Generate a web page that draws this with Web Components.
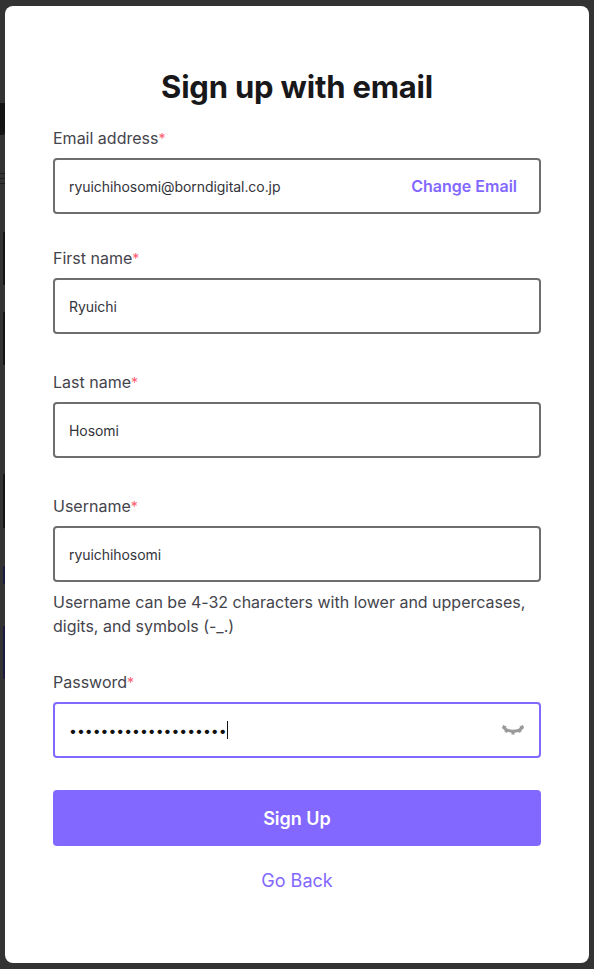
<!DOCTYPE html>
<html lang="en">
<head>
<meta charset="utf-8">
<title>Sign up with email</title>
<style>
  html, body { margin: 0; padding: 0; background: #333; }
  body { font-family: "Inter", "Liberation Sans", sans-serif; }
</style>
</head>
<body>
<signup-page>
  <signup-card heading="Sign up with email">
    <signup-field label="Email address">
      ryuichihosomi@borndigital.co.jp
      <span slot="action">Change Email</span>
    </signup-field>
    <signup-field label="First name" style="margin-top:32px">Ryuichi</signup-field>
    <signup-field label="Last name" style="margin-top:36px">Hosomi</signup-field>
    <signup-field label="Username" style="margin-top:36px">
      ryuichihosomi
      <span slot="hint">Username can be 4-32 characters with lower and uppercases, digits, and symbols (-_.)</span>
    </signup-field>
    <signup-field label="Password" focused masked style="margin-top:32px">
      ••••••••••••••••••••
      <signup-eye slot="action"></signup-eye>
    </signup-field>
    <signup-button style="margin-top:32px">Sign Up</signup-button>
    <signup-link style="margin-top:22px">Go Back</signup-link>
  </signup-card>
</signup-page>

<script>
class SignupPage extends HTMLElement {
  constructor() {
    super();
    this.attachShadow({ mode: 'open' });
    this.shadowRoot.innerHTML = `<style>
      :host {
        display: block;
        position: relative;
        box-sizing: border-box;
        height: 969px;
        padding: 6px 5px;
        background: #333;
        overflow: hidden;
      }
      /* what shows of the page behind the dimmed overlay */
      .bleed { position: absolute; left: 3px; width: 2px; background: #141414; border-radius: 1px 0 0 1px; }
      .bleed.glyph { left: 0; width: 5px; background: #141414; border-radius: 0 0 3px 0; }
      .bleed.text { left: 0; width: 5px; height: 1px; background: #1c1c1c; }
      .bleed.blue { background: #1d1a40; }
    </style>
    <div class="bleed glyph" style="top:103px;height:32px"></div>
    <div class="bleed text" style="top:173px"></div>
    <div class="bleed text" style="top:178px"></div>
    <div class="bleed text" style="top:183px"></div>
    <div class="bleed" style="top:232px;height:53px"></div>
    <div class="bleed" style="top:312px;height:53px"></div>
    <div class="bleed" style="top:474px;height:54px"></div>
    <div class="bleed blue" style="top:566px;height:18px"></div>
    <div class="bleed blue" style="top:626px;height:53px"></div>
    <slot></slot>`;
  }
}

class SignupCard extends HTMLElement {
  constructor() {
    super();
    this.attachShadow({ mode: 'open' });
    this.shadowRoot.innerHTML = `<style>
      :host {
        display: flex;
        flex-direction: column;
        position: relative;
        box-sizing: border-box;
        height: 957px;
        padding: 61px 48px 0;
        background: #fff;
        border-radius: 8px;
      }
      h1 {
        margin: 0 0 19px;
        font: 700 31px/40px "Inter", "Liberation Sans", sans-serif;
        letter-spacing: -0.2px;
        color: #18181b;
        text-align: center;
      }
    </style>
    <h1></h1>
    <slot></slot>`;
    this.shadowRoot.querySelector('h1').textContent = this.getAttribute('heading');
  }
}

class SignupField extends HTMLElement {
  constructor() {
    super();
    this.attachShadow({ mode: 'open' });
    this.shadowRoot.innerHTML = `<style>
      :host {
        display: block;
        font-family: "Inter", "Liberation Sans", sans-serif;
      }
      .label {
        font-size: 16px;
        line-height: 24px;
        color: #44444c;
        margin-bottom: 8px;
      }
      .label b { font-weight: 400; font-size: 14px; line-height: 0; color: #fb5a6e; }
      .box {
        box-sizing: border-box;
        display: flex;
        align-items: center;
        justify-content: space-between;
        height: 56px;
        padding: 0 22px 0 14px;
        border: 2px solid #6e6e6e;
        border-radius: 4px;
        background: #fff;
        font-size: 14px;
        letter-spacing: -0.06px;
        color: #33333a;
      }
      :host([focused]) .box { border-color: #8268ff; padding-right: 14px; }
      .value { display: flex; align-items: center; white-space: nowrap; }
      :host([masked]) .value { color: #111; letter-spacing: 0; }
      :host([focused]) .value::after {
        content: "";
        width: 1px;
        height: 18px;
        background: #111;
      }
      ::slotted([slot="action"]) {
        font-size: 16px;
        font-weight: 600;
        letter-spacing: 0;
        color: #8268ff;
      }
      ::slotted([slot="hint"]) {
        display: block;
        margin-top: 8px;
        font-size: 16px;
        line-height: 24px;
        letter-spacing: -0.01px;
        color: #44444c;
      }
    </style>
    <div class="label"><span class="text"></span><b>*</b></div>
    <div class="box">
      <div class="value"><slot></slot></div>
      <slot name="action"></slot>
    </div>
    <slot name="hint"></slot>`;
    this.shadowRoot.querySelector('.text').textContent = this.getAttribute('label');
  }
}

class SignupEye extends HTMLElement {
  constructor() {
    super();
    this.attachShadow({ mode: 'open' });
    this.shadowRoot.innerHTML = `<style>
      :host { display: block; width: 24px; height: 16px; }
      svg { display: block; }
    </style>
    <svg width="24" height="16" viewBox="0 0 24 16" fill="none" stroke="#9a9a9a" stroke-width="3">
      <path d="M2.5 5.5C7 10.5 17 10.5 21.5 5.5"/>
      <path d="M12 9v3.5M6 8l-1.6 2.2M18 8l1.6 2.2M1.5 4.5l3.5 1.5M22.5 4.5l-3.5 1.5"/>
    </svg>`;
  }
}

class SignupButton extends HTMLElement {
  constructor() {
    super();
    this.attachShadow({ mode: 'open' });
    this.shadowRoot.innerHTML = `<style>
      :host {
        display: flex;
        align-items: center;
        justify-content: center;
        height: 56px;
        border-radius: 4px;
        background: #8268ff;
        color: #fff;
        font: 600 18px "Inter", "Liberation Sans", sans-serif;
      }
    </style><slot></slot>`;
  }
}

class SignupLink extends HTMLElement {
  constructor() {
    super();
    this.attachShadow({ mode: 'open' });
    this.shadowRoot.innerHTML = `<style>
      :host {
        display: block;
        text-align: center;
        font: 400 18px/24px "Inter", "Liberation Sans", sans-serif;
        padding-top: 1px;
        color: #8268ff;
      }
    </style><slot></slot>`;
  }
}

customElements.define('signup-page', SignupPage);
customElements.define('signup-card', SignupCard);
customElements.define('signup-field', SignupField);
customElements.define('signup-eye', SignupEye);
customElements.define('signup-button', SignupButton);
customElements.define('signup-link', SignupLink);
</script>
</body>
</html>
